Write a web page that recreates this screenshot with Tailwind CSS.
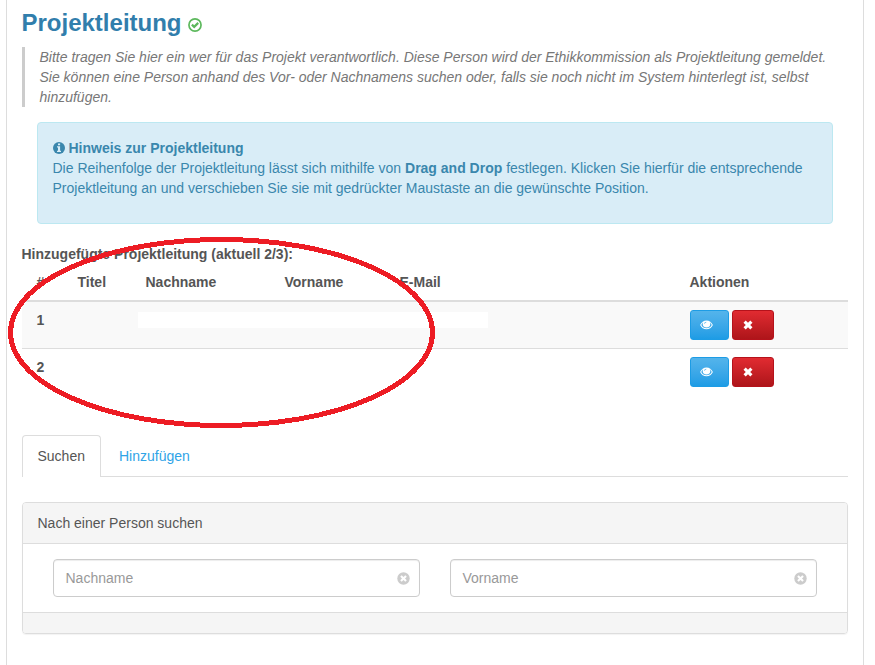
<!DOCTYPE html>
<html lang="de">
<head>
<meta charset="utf-8">
<title>Projektleitung</title>
<script src="https://cdn.jsdelivr.net/npm/@tailwindcss/browser@4"></script>
</head>
<body class="h-screen overflow-hidden bg-white text-[14px] leading-[20px] text-[#555555]" style="font-family:'Liberation Sans',Arial,sans-serif">
<svg class="hidden">
  <symbol id="eye" viewBox="0 0 13 10"><path fill="currentColor" fill-rule="evenodd" d="M6.500.4C9.300.4 11.700 2.200 12.900 4.900 11.700 7.600 9.300 9.300 6.500 9.300S1.300 7.600.1 4.900C1.300 2.200 3.700.4 6.500.4ZM3.100 2.300C2.300 3 1.700 3.900 1.300 4.900 2.400 7 4.300 8.200 6.500 8.200s4.100-1.200 5.200-3.300c-.4-1-1-1.900-1.800-2.600.3.500.4 1.100.4 1.700A3.800 3.400 0 0 1 2.700 4c0-.6.100-1.200.4-1.700ZM6.300 1.800C5.100 1.900 4.400 2.600 4.300 3.700l.6.100C5.100 2.900 5.500 2.500 6.400 2.300Z"/></symbol>
  <symbol id="cross" viewBox="0 0 10 10"><path fill="currentColor" d="M2.700.5 5 2.800 7.300.5 9.500 2.700 7.200 5 9.500 7.300 7.300 9.500 5 7.200 2.700 9.500.5 7.300 2.800 5 .5 2.700Z"/></symbol>
  <symbol id="clear" viewBox="0 0 13 13"><circle cx="6.500" cy="6.500" r="6.200" fill="currentColor"/><path fill="#fff" d="M4.700 3.200 6.500 5 8.300 3.200 9.800 4.700 8 6.500 9.800 8.300 8.300 9.800 6.500 8 4.700 9.800 3.200 8.300 5 6.500 3.200 4.700Z"/></symbol>
</svg>
<main class="relative ml-[6px] h-full w-[858px] border-x border-[#dddddd] px-[15px]">
  <h1 class="-ml-[0.5px] flex h-[47px] items-start pt-[7px] text-[24px] leading-[32px] font-bold text-[#317eac]">Projektleitung
    <svg class="mt-[11px] ml-[6.5px] h-[14px] w-[14px]" viewBox="0 0 14 14" fill="none" stroke="#5cb85c"><circle cx="7" cy="7" r="6.050" stroke-width="1.700"/><path d="m3.900 6.600 2.300 2.300 4-4" stroke-width="2.200"/></svg>
  </h1>
  <blockquote class="h-[60px] border-l-[3px] border-[#cccccc] pl-[14.5px] text-[#777777] italic">
    <p class="w-[800px]">Bitte tragen Sie hier ein wer für das Projekt verantwortlich. Diese Person wird der Ethikkommission als Projektleitung gemeldet.<br>Sie können eine Person anhand des Vor- oder Nachnamens suchen oder, falls sie noch nicht im System hinterlegt ist, selbst<br>hinzufügen.</p>
  </blockquote>
  <section class="mx-[15px] mt-[15px] h-[102px] rounded border border-[#bce8f1] bg-[#d9edf7] py-[15px] pl-[14.5px] text-[#3a87ad]">
    <div class="flex items-center font-bold"><svg class="mr-[4px] h-[12px] w-[12px]" viewBox="0 0 12 12"><circle cx="6" cy="6" r="6" fill="currentColor"/><path fill="#d9edf7" d="M5 1.500h2.100v1.800H5zM4 4.300h3.100v4.400H8V10H4V8.700h1V5.500H4z"/></svg>Hinweis zur Projektleitung</div>
    <p class="whitespace-nowrap">Die Reihenfolge der Projektleitung lässt sich mithilfe von <b>Drag and Drop</b> festlegen. Klicken Sie hierfür die entsprechende<br>Projektleitung an und verschieben Sie sie mit gedrückter Maustaste an die gewünschte Position.</p>
  </section>
  <h2 class="mt-[20px] -ml-[0.5px] font-bold">Hinzugefügte Projektleitung (aktuell 2/3):</h2>
  <div class="grid h-[38px] grid-cols-[41px_68px_139px_115px_290px_1fr] items-center border-b-2 border-[#dddddd] pl-[14.5px] font-bold">
    <span>#</span><span>Titel</span><span>Nachname</span><span>Vorname</span><span>E-Mail</span><span>Aktionen</span>
  </div>
  <div class="grid h-[46px] grid-cols-[101px_350px_202px_1fr] bg-[#f9f9f9] pt-[8px] pl-[15px]">
    <b class="-ml-[0.5px] leading-[21px]">1</b><span class="mt-[2px] h-[16px] bg-white"></span><span></span>
    <div class="flex gap-[3px]">
      <button class="h-[30px] w-[39px] rounded-[3px] border border-[#1d9ce5] bg-linear-to-b from-[#54b4eb] to-[#1d9ce5] pl-[9px] text-white" aria-label="Anzeigen"><svg class="h-[10px] w-[13px]"><use href="#eye"/></svg></button>
      <button class="h-[30px] w-[42px] rounded-[3px] border border-[#b5121b] bg-linear-to-b from-[#e12b31] to-[#ae151a] pl-[10px] text-white" aria-label="Löschen"><svg class="h-[10px] w-[10px]"><use href="#cross"/></svg></button>
    </div>
  </div>
  <div class="grid h-[86px] grid-cols-[101px_350px_202px_1fr] border-t border-[#dddddd] pt-[8px] pl-[15px]">
    <b class="-ml-[0.5px] leading-[21px]">2</b><span></span><span></span>
    <div class="flex items-start gap-[3px]">
      <button class="h-[30px] w-[39px] rounded-[3px] border border-[#1d9ce5] bg-linear-to-b from-[#54b4eb] to-[#1d9ce5] pl-[9px] text-white" aria-label="Anzeigen"><svg class="h-[10px] w-[13px]"><use href="#eye"/></svg></button>
      <button class="h-[30px] w-[42px] rounded-[3px] border border-[#b5121b] bg-linear-to-b from-[#e12b31] to-[#ae151a] pl-[10px] text-white" aria-label="Löschen"><svg class="h-[10px] w-[10px]"><use href="#cross"/></svg></button>
    </div>
  </div>
  <nav class="mt-px flex h-[42px] border-b border-[#dddddd]">
    <a class="h-[42px] w-[79px] rounded-t border border-b-0 border-[#dddddd] bg-white pt-[10px] pl-[14.5px]">Suchen</a>
    <a class="pt-[11px] pl-[18px] text-[#2fa4e7]">Hinzufügen</a>
  </nav>
  <section class="mt-[25px] h-[132px] overflow-hidden rounded border border-[#dddddd] shadow-[0_1px_1px_rgba(0,0,0,0.05)]">
    <h3 class="h-[41px] border-b border-[#dddddd] bg-[#f5f5f5] pt-[10px] pl-[14.5px]">Nach einer Person suchen</h3>
    <div class="flex h-[68px] gap-[30px] px-[30px] pt-[15px]">
      <label class="flex h-[38px] flex-1 items-center justify-between rounded border border-[#cccccc] pr-[9px] pl-[11.5px] text-[#999999] shadow-[inset_0_1px_1px_rgba(0,0,0,0.075)]">Nachname<svg class="h-[13px] w-[13px] text-[#cccccc]"><use href="#clear"/></svg></label>
      <label class="flex h-[38px] flex-1 items-center justify-between rounded border border-[#cccccc] pr-[9px] pl-[11.5px] text-[#999999] shadow-[inset_0_1px_1px_rgba(0,0,0,0.075)]">Vorname<svg class="h-[13px] w-[13px] text-[#cccccc]"><use href="#clear"/></svg></label>
    </div>
    <div class="h-[21px] border-t border-[#dddddd] bg-[#f5f5f5]"></div>
  </section>
</main>
<svg class="pointer-events-none absolute top-[237px] left-[8px] h-[191px] w-[427px]" viewBox="0 0 427 191" shape-rendering="crispEdges"><ellipse cx="213.500" cy="95.500" rx="211" ry="93" fill="none" stroke="#ed1c24" stroke-width="5"/></svg>
</body>
</html>
